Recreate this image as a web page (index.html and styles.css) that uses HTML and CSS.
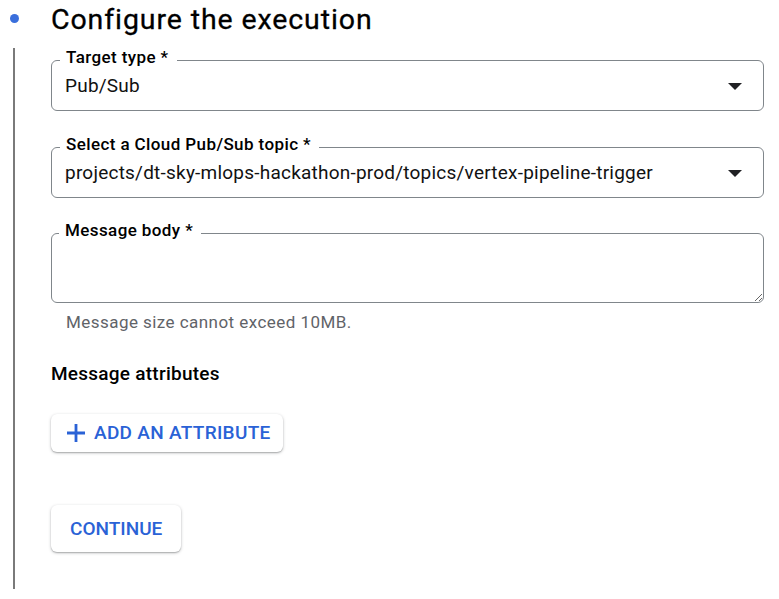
FILE: index.html
```html
<!DOCTYPE html>
<html lang="en">
<head>
<meta charset="utf-8">
<title>Configure the execution</title>
<link rel="stylesheet" href="styles.css">
</head>
<body>
<div class="step">
  <div class="rail">
    <span class="dot"></span>
    <span class="line"></span>
  </div>
  <div class="content">
    <h2 class="title">Configure the execution</h2>

    <div class="field select">
      <label class="label">Target type *</label>
      <div class="value">Pub/Sub</div>
      <svg class="arrow" width="14" height="7" viewBox="0 0 14 7"><path d="M0 0h14L7 7z" fill="#202124"/></svg>
    </div>

    <div class="field select gap">
      <label class="label">Select a Cloud Pub/Sub topic *</label>
      <div class="value">projects/dt-sky-mlops-hackathon-prod/topics/vertex-pipeline-trigger</div>
      <svg class="arrow" width="14" height="7" viewBox="0 0 14 7"><path d="M0 0h14L7 7z" fill="#202124"/></svg>
    </div>

    <div class="field area">
      <label class="label">Message body *</label>
      <textarea class="textarea"></textarea>
    </div>
    <div class="hint">Message size cannot exceed 10MB.</div>

    <div class="subhead">Message attributes</div>

    <button class="btn add">
      <svg class="plus" width="18" height="18" viewBox="0 0 18 18"><path d="M7.6 0h2.8v18H7.6z M0 7.6h18v2.8H0z" fill="currentColor"/></svg>
      <span>ADD AN ATTRIBUTE</span>
    </button>

    <div>
      <button class="btn continue">CONTINUE</button>
    </div>
  </div>
</div>
</body>
</html>
```

FILE: styles.css
```css
html, body {
  margin: 0;
  padding: 0;
  background: #ffffff;
}

body {
  font-family: Roboto, "Liberation Sans", Arial, sans-serif;
  color: #111111;
}

.step {
  display: grid;
  grid-template-columns: 28px 1fr;
  column-gap: 23px;
  padding-right: 15px;
}

.rail {
  display: flex;
  flex-direction: column;
  align-items: center;
}

.dot {
  width: 9px;
  height: 9px;
  border-radius: 50%;
  background: #3a6fdc;
  margin-top: 13.5px;
}

.line {
  flex: 1;
  width: 2px;
  background: #7a7a7a;
  margin-top: 25.5px;
}

.content {
  display: flex;
  flex-direction: column;
  align-items: stretch;
  padding-bottom: 37px;
}

.title {
  margin: 2px 0 0 0;
  font-size: 28.5px;
  line-height: 36px;
  font-weight: 400;
  letter-spacing: 0.9px;
  color: #000000;
  -webkit-text-stroke: 0.3px #000000;
}

.field {
  position: relative;
  margin-top: 22px;
}

.field.gap {
  margin-top: 36px;
}

.field.area {
  margin-top: 35px;
  display: flex;
}

.select {
  border: 1px solid #80868b;
  border-radius: 6px;
  padding: 13px 48px 12px 13px;
}

.label {
  position: absolute;
  top: -13px;
  left: 8px;
  padding: 0 8px 0 6px;
  background: #ffffff;
  font-size: 17px;
  line-height: 18px;
  font-weight: 500;
  letter-spacing: 0.4px;
  color: #000000;
  z-index: 1;
}

.area .label {
  top: -12.5px;
}

.value {
  font-size: 19px;
  line-height: 24px;
  letter-spacing: 0.22px;
  color: #111111;
  white-space: nowrap;
}

.arrow {
  position: absolute;
  right: 21px;
  top: 50%;
  margin-top: -3px;
}

.textarea {
  flex: 1;
  box-sizing: border-box;
  height: 70px;
  border: 1px solid #80868b;
  border-radius: 6px;
  resize: vertical;
  margin: 0;
  padding: 12px 13px;
  font-family: inherit;
  font-size: 19px;
  background: #ffffff;
  outline: none;
}

.hint {
  margin-top: 8.5px;
  padding-left: 15px;
  font-size: 17px;
  line-height: 20px;
  letter-spacing: 0.45px;
  color: #5f6368;
}

.subhead {
  margin-top: 30px;
  font-size: 19px;
  line-height: 24px;
  font-weight: 500;
  letter-spacing: 0.25px;
  color: #000000;
}

.btn {
  font-family: Roboto, "Liberation Sans", Arial, sans-serif;
  font-weight: 500;
  color: #2a62d6;
  background: #ffffff;
  border: none;
  border-radius: 6px;
  box-shadow: 0 1px 3px rgba(60, 64, 67, 0.35), 0 1px 1px rgba(60, 64, 67, 0.2);
  cursor: pointer;
  padding: 0;
}

.add {
  align-self: flex-start;
  margin-top: 28px;
  height: 38px;
  display: flex;
  align-items: center;
  gap: 9px;
  padding: 0 12px 0 16px;
  font-size: 19px;
  letter-spacing: 0.3px;
}

.plus {
  display: block;
}

.continue {
  margin-top: 53px;
  height: 47px;
  padding: 0 19px;
  font-size: 19px;
}
```
